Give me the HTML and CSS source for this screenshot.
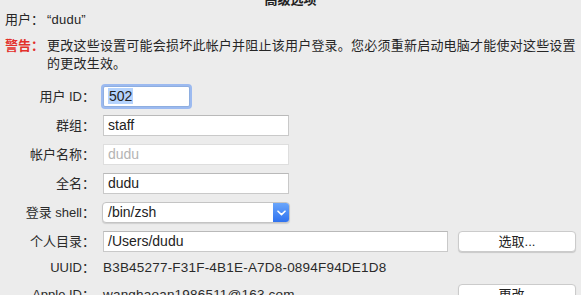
FILE: index.html
```html
<!DOCTYPE html>
<html lang="zh-CN">
<head>
<meta charset="utf-8">
<title>高级选项</title>
<link rel="stylesheet" href="styles.css">
</head>
<body>
<div class="sheet">
  <div class="title">高级选项</div>
  <div class="info">
    <div class="info-label">用户：</div>
    <div class="info-text">“dudu”</div>
    <div class="info-label warn">警告：</div>
    <div class="info-text">更改这些设置可能会损坏此帐户并阻止该用户登录。您必须重新启动电脑才能使对这些设置的更改生效。</div>
  </div>
  <div class="form">
    <div class="label">用户 ID：</div>
    <div class="cell"><div class="field short focus"><span class="sel">502</span></div></div>
    <div></div>

    <div class="label">群组：</div>
    <div class="cell"><div class="field mid">staff</div></div>
    <div></div>

    <div class="label">帐户名称：</div>
    <div class="cell"><div class="field mid disabled">dudu</div></div>
    <div></div>

    <div class="label">全名：</div>
    <div class="cell"><div class="field mid">dudu</div></div>
    <div></div>

    <div class="label">登录 shell：</div>
    <div class="cell">
      <div class="popup">
        <span class="popup-text">/bin/zsh</span>
        <span class="popup-arrow"><svg width="9" height="6" viewBox="0 0 9 6"><path d="M1 1.2 L4.5 4.6 L8 1.2" fill="none" stroke="#fff" stroke-width="1.6" stroke-linecap="round" stroke-linejoin="round"/></svg></span>
      </div>
    </div>
    <div></div>

    <div class="label">个人目录：</div>
    <div class="cell"><div class="field wide">/Users/dudu</div></div>
    <div class="cell"><button class="btn">选取...</button></div>

    <div class="label slim">UUID：</div>
    <div class="value slim">B3B45277-F31F-4B1E-A7D8-0894F94DE1D8</div>
    <div></div>

    <div class="label">Apple ID：</div>
    <div class="value">wanghaoan1986511@163.com</div>
    <div class="cell"><button class="btn">更改...</button></div>
  </div>
</div>
</body>
</html>
```

FILE: styles.css
```css
html, body {
  margin: 0;
  padding: 0;
  background: #ececec;
  overflow: hidden;
}
body {
  width: 581px;
  height: 295px;
  font-family: "Liberation Sans", "Noto Sans CJK SC", sans-serif;
  font-size: 13px;
  color: #262626;
}
.sheet {
  display: flex;
  flex-direction: column;
}
.title {
  margin-top: -8px;
  height: 16px;
  line-height: 16px;
  font-weight: bold;
  text-align: center;
  color: #222;
}
.info {
  margin-top: 3px;
  padding-left: 5px;
  display: grid;
  grid-template-columns: 42px 534px;
  row-gap: 8px;
  line-height: 18px;
}
.info-label {
  white-space: nowrap;
}
.info-text {
  letter-spacing: 0.22px;
}
.warn {
  color: #e3302b;
  font-weight: bold;
}
.form {
  margin-top: 13px;
  display: grid;
  grid-template-columns: 95px 345px 120px;
  column-gap: 8px;
  row-gap: 8px;
  align-items: center;
}
.label {
  text-align: right;
  white-space: nowrap;
  line-height: 21px;
  color: #2a2a2a;
}
.slim {
  line-height: 16px;
}
.value {
  line-height: 21px;
  white-space: nowrap;
  color: #2a2a2a;
  font-size: 13.5px;
  letter-spacing: 0.2px;
}
.value.slim {
  line-height: 16px;
}
.cell {
  display: flex;
  align-items: center;
  height: 21px;
}
.field {
  box-sizing: border-box;
  height: 21px;
  background: #fff;
  border: 1px solid #c9c9c9;
  border-top-color: #b9b9b9;
  padding: 0 4px;
  line-height: 19px;
  font-size: 14px;
  color: #222;
  white-space: nowrap;
}
.short { width: 87px; }
.mid { width: 186px; }
.wide { width: 345px; }
.focus {
  border-color: #8eaee0;
  box-shadow: 0 0 0 2px #9cbaf0;
  border-radius: 2px;
}
.sel {
  background: #b5d3fd;
  padding: 0 1px;
}
.disabled {
  color: #b4b4b4;
  border-color: #dedede;
}
.popup {
  box-sizing: border-box;
  width: 188px;
  height: 21px;
  margin-left: -1px;
  display: flex;
  background: #fff;
  border: 1px solid #c4c4c4;
  border-radius: 4px;
  box-shadow: 0 1px 1px rgba(0,0,0,0.12);
  overflow: hidden;
}
.popup-text {
  flex: 1;
  padding-left: 5px;
  line-height: 19px;
  font-size: 14px;
  color: #222;
}
.popup-arrow {
  width: 16px;
  display: flex;
  align-items: center;
  justify-content: center;
  background: linear-gradient(#6aa6fb, #2f72ef);
}
.btn {
  box-sizing: border-box;
  margin-left: 2px;
  width: 120px;
  height: 21px;
  padding: 0;
  background: #fff;
  border: 1px solid #cbcbcb;
  border-radius: 4px;
  box-shadow: 0 1px 1px rgba(0,0,0,0.15);
  font-family: "Liberation Sans", "Noto Sans CJK SC", sans-serif;
  font-size: 13px;
  color: #222;
  line-height: 19px;
  text-align: center;
}
```
